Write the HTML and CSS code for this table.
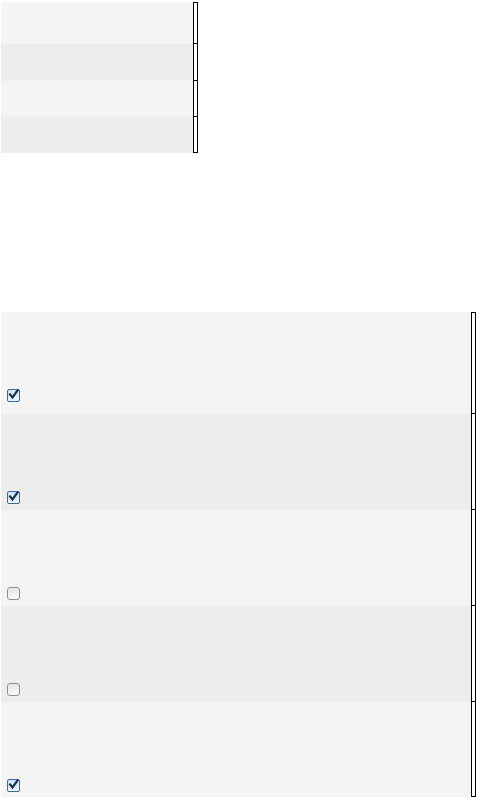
FILE: index.html
```html
<!DOCTYPE html>
<html>
<head>
<meta charset="utf-8">
<link rel="stylesheet" href="styles.css">
</head>
<body>
<div class="grid small">
  <div class="row first"><div class="cell odd"></div><div class="mark"></div></div>
  <div class="row"><div class="cell even"></div><div class="mark"></div></div>
  <div class="row"><div class="cell odd"></div><div class="mark"></div></div>
  <div class="row"><div class="cell even"></div><div class="mark"></div></div>
</div>

<div class="grid big">
  <div class="row first"><div class="cell odd"><span class="cb checked"><svg viewBox="0 0 13 13"><path d="M3 6.5 L5.5 9.5 L10.5 2.5" /></svg></span></div><div class="mark"></div></div>
  <div class="row"><div class="cell even"><span class="cb checked"><svg viewBox="0 0 13 13"><path d="M3 6.5 L5.5 9.5 L10.5 2.5" /></svg></span></div><div class="mark"></div></div>
  <div class="row"><div class="cell odd"><span class="cb"></span></div><div class="mark"></div></div>
  <div class="row"><div class="cell even"><span class="cb"></span></div><div class="mark"></div></div>
  <div class="row"><div class="cell odd"><span class="cb checked"><svg viewBox="0 0 13 13"><path d="M3 6.5 L5.5 9.5 L10.5 2.5" /></svg></span></div><div class="mark"></div></div>
</div>
</body>
</html>
```
FILE: styles.css
```css
html, body {
  margin: 0;
  padding: 0;
  background: #ffffff;
  font-family: "Liberation Sans", Arial, sans-serif;
}

.grid {
  display: flex;
  flex-direction: column;
  margin-left: 1px;
}

.small {
  width: 197px;
  margin-top: 2px;
}

.big {
  width: 475px;
  margin-top: 159px;
}

.row {
  display: flex;
}

.cell {
  flex: 1;
  display: flex;
  align-items: flex-start;
}

.odd { background: #f4f4f4; }
.even { background: #ededed; }

.mark {
  width: 5px;
  box-sizing: border-box;
  border: 1px solid #000;
  border-top: none;
}

.row.first .mark {
  border-top: 1px solid #000;
}

.small .row { height: 36px; }
.small .row.first { height: 42px; }
.small .row:nth-child(2) { height: 37px; }

.big .row { height: 96px; }
.big .row.first { height: 102px; }
.big .row:last-child { height: 95px; }

.big .cell { padding: 77px 0 0 6px; }

.cb {
  width: 13px;
  height: 13px;
  box-sizing: border-box;
  border: 1px solid #8e8f8f;
  border-radius: 3px;
  background: linear-gradient(#e6e6e6, #fbfbfb);
  display: block;
}

.cb.checked {
  border: 1px solid #3d6b9e;
  border-radius: 2px;
  background: linear-gradient(#cfe4f6, #e9f3fc);
  position: relative;
}

.cb svg {
  position: absolute;
  left: -1px;
  top: -2px;
  width: 13px;
  height: 13px;
  overflow: visible;
}

.cb svg path {
  fill: none;
  stroke: #1c2f55;
  stroke-width: 2.2;
  stroke-linecap: square;
}
```
